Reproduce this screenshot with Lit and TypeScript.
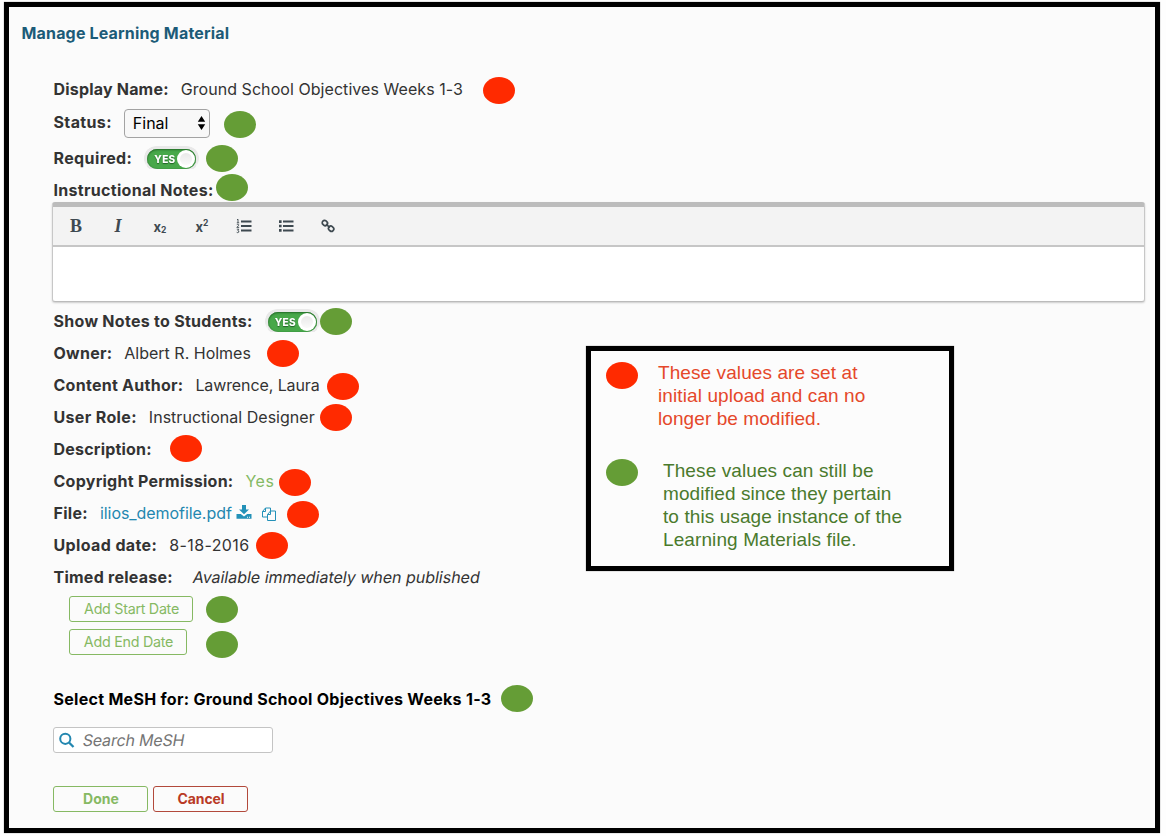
import { LitElement, html, css, svg, nothing } from "lit";
import { customElement, property } from "lit/decorators.js";
import { styleMap } from "lit/directives/style-map.js";

/** A run of text tracked so that it fills a given advance width. */
@customElement("fit-text")
class FitText extends LitElement {
  @property() text = "";
  @property({ type: Number }) w = 0;

  static styles = css`
    :host { display: inline-block; white-space: pre; flex: none; }
    .run { display: inline-block; }
  `;

  updated() {
    const run = this.renderRoot.querySelector(".run") as HTMLElement;
    run.style.letterSpacing = "0px";
    const natural = run.offsetWidth;
    run.style.letterSpacing = (this.w - natural) / this.text.length + "px";
  }

  render() {
    return html`<span class="run">${this.text}</span>`;
  }
}

type Dot = [string, number, number];
const dots: Dot[] = [
  ["red", 483, 77], ["green", 224, 111], ["green", 206, 145], ["green", 216, 174],
  ["green", 320, 308], ["red", 267, 340], ["red", 327, 373], ["red", 320, 404],
  ["red", 170, 435], ["red", 279, 469], ["red", 287, 501], ["red", 256, 532],
  ["green", 206, 596], ["green", 206, 631], ["green", 501, 685],
  ["red", 606, 362], ["green", 606, 459],
];

const t = (text: string, w: number, cls = "") =>
  html`<fit-text class=${cls} .text=${text} .w=${w}></fit-text>`;

@customElement("app-root")
class AppRoot extends LitElement {
  static styles = css`
    :host {
      display: block; position: relative; width: 1166px; height: 836px;
      background: #fefefe; overflow: hidden; box-sizing: border-box;
      padding: 2px 6px 3px 4px;
      font: 16px/20px Inter, "Liberation Sans", sans-serif; color: #333;
    }
    * { box-sizing: border-box; }
    svg { display: block; flex: none; }
    .frame {
      height: 831px; border: 5px solid #000; background: #fbfbfb;
      box-shadow: 0 0 1px #777; padding: 16px 10px 0 12px;
    }
    .title { color: #1c5b78; font-weight: 700; height: 20px; display: flex; padding-left: 0.5px; }
    .form { padding: 30px 0 0 32px; display: flex; flex-direction: column; }
    .row { height: 32px; display: flex; align-items: center; }
    .row > fit-text.label { font-weight: 700; margin-right: 12px; padding-left: 0.5px; }
    .status { height: 36px; }
    .status .label { margin-bottom: 2px; }
    .required { height: 34px; }
    .notes { height: 27px; padding-top: 3px; }
    .select {
      width: 86px; height: 29px; border: 1px solid #a3a3a3; border-radius: 4px;
      background: #f8f8f8; color: #000; display: flex; align-items: center;
      justify-content: space-between; padding: 0 3px 0 8px;
    }
    .toggle {
      width: 55px; height: 25px; border-radius: 12px; background: #e9e9e9;
      padding: 3px 3px 2px; margin-top: 1px;
      -webkit-mask: linear-gradient(#000 0 60%, transparent 85%), linear-gradient(#000, #000) 3px 3px / 49px 20px no-repeat;
    }
    .track {
      height: 20px; border-radius: 10px; background: #48a84a;
      box-shadow: inset 0 1px 2px #246d28, inset 0 0 1px #246d28;
      display: flex; align-items: center; justify-content: space-between; padding: 0 1px 0 7px;
      color: #fff; font-weight: 800; font-size: 10px; line-height: 20px;
      text-shadow: 0 1px 1px #226326;
    }
    .knob {
      width: 18px; height: 18px; border-radius: 50%; background: #fff;
      display: flex; align-items: center; justify-content: center;
    }
    .knob::after {
      content: ""; width: 12px; height: 12px; border-radius: 50%;
      background: linear-gradient(#e9e9e9, #fafafa);
    }
    .editor {
      width: 1093px; height: 100px; margin-left: -1px; border: 1px solid #c7c7c7; border-top: 5px solid #bcbcbc;
      border-bottom-color: #bbb; border-radius: 3px; background: #fff; box-shadow: 0 1px 2px #ccc;
      margin-bottom: 3px; flex: none;
    }
    .tools {
      height: 40px; background: #f3f3f3; border-bottom: 2px solid #c6c6c6;
      display: flex; align-items: center; color: #3e4950; padding-left: 2px;
    }
    .tool { width: 42px; height: 38px; display: flex; align-items: center; justify-content: center; }
    .serif { font: 700 18px/20px "Liberation Serif", serif; }
    .italic { font-style: italic; }
    .script { font-weight: 700; font-size: 13px; padding-top: 1px; }
    .script span { font-size: 8.5px; position: relative; top: 3px; }
    .script .up { top: -4px; }
    .oblique { transform: skewX(-10deg); }
    .yes { color: #84b963; }
    .link { color: #2387b0; }
    .icon-dl { margin-left: 4px; margin-top: -2px; }
    .icon-copy { margin-left: 10px; margin-top: 2px; }
    .row.timed > .label { margin-right: 20px; }
    .date {
      height: 26px; border: 1px solid #86b963; border-radius: 3px; color: #86b963;
      margin: 3px 0 0 16px; display: flex; align-items: center; justify-content: center; font-size: 14.3px;
    }
    .date fit-text, .action fit-text { padding-left: 1px; }
    .start { width: 124px; }
    .end { width: 118px; margin-top: 7px; }
    .mesh { margin-top: 28px; color: #000; }
    .search {
      width: 220px; height: 26px; margin-top: 12px; border: 1px solid #c4c4c4; border-radius: 3px; background: #fff;
      display: flex; align-items: center; padding-left: 5px; color: #757575; gap: 8px;
    }
    .actions { display: flex; gap: 5px; margin-top: 33px; }
    .action {
      width: 95px; height: 26px; border: 1px solid #86b963; border-radius: 3px; color: #86b963;
      font-weight: 700; font-size: 14px; display: flex; align-items: center; justify-content: center;
    }
    .cancel { color: #b93a26; border-color: #b2493b; }
    .dot { position: absolute; width: 32px; height: 27px; border-radius: 50%; }
    .dot.red { background: #ff2a00; }
    .dot.green { background: #659d36; }
    .legend {
      position: absolute; left: 586px; top: 346px; width: 368px; height: 225px;
      border: 5px solid #000; background: #fcfcfc; padding: 10px 0 0 67px; box-shadow: 0 0 1px #777;
      font: 19px/23px "Liberation Sans", sans-serif; display: flex; flex-direction: column; color: #e5482a;
    }
    .legend .g { color: #4a7a2c; margin-left: 5px; }
    .legend .g1 { margin-top: 29px; }
  `;

  toggle() {
    return html`<div class="toggle"><div class="track">${t("YES", 21)}<div class="knob"></div></div></div>`;
  }

  field(label: string, lw: number, value = "", vw = 0, cls = "", rowCls = "") {
    return html`<div class="row ${rowCls}">
      ${t(label, lw, "label")}${value ? t(value, vw, cls) : nothing}
    </div>`;
  }

  list(numbered: boolean) {
    return html`<svg width="16" height="16" viewBox="0 0 16 16" fill="#3e4950">
      <path d="M5 2.6h10.5v2H5zM5 7h10.5v2H5zM5 11.4h10.5v2H5z" />
      ${numbered
        ? svg`<g fill="none" stroke="#3e4950" stroke-width=".9"><path d="M1 1.8l1-.6v3.6M.8 4.8h2.4M.8 6.7q1-.8 1.9 0q.4.7-1.9 2.7h2.4M.8 11.2h2l-1 1.3q1.6.1.9 1.7-.9.9-2 .1"/></g>`
        : svg`<path d="M1 2.3h2.6v2.6H1zM1 6.7h2.6v2.6H1zM1 11.1h2.6v2.6H1z"/>`}
    </svg>`;
  }

  render() {
    return html`
      <div class="frame">
        <div class="title">${t("Manage Learning Material", 208)}</div>
        <div class="form">
          ${this.field("Display Name:", 115.5, "Ground School Objectives Weeks 1-3", 282)}
          <div class="row status">
            ${t("Status:", 58.5, "label")}
            <div class="select">${t("Final", 36)}
              <svg width="9" height="16" viewBox="0 0 9 16"><path d="M4.5 1L8.2 6.8H.8zM4.5 15L8.2 9.2H.8z" fill="#000" /></svg>
            </div>
          </div>
          <div class="row required">${t("Required:", 78.5, "label")}${this.toggle()}</div>
          <div class="row notes">${t("Instructional Notes:", 160, "label")}</div>
          <div class="editor">
            <div class="tools">
              <div class="tool serif">B</div>
              <div class="tool serif italic">I</div>
              <div class="tool script">x<span>2</span></div>
              <div class="tool script">x<span class="up">2</span></div>
              <div class="tool">${this.list(true)}</div>
              <div class="tool">${this.list(false)}</div>
              <div class="tool">
                <svg width="14" height="14" viewBox="0 0 14 14" fill="none" stroke="#3e4950" stroke-width="1.7">
                  <rect x="1.2" y="1.8" width="5.4" height="4.6" rx="2.2" transform="rotate(42 4 4)" />
                  <rect x="7.2" y="7.4" width="5.4" height="4.6" rx="2.2" transform="rotate(42 10 10)" />
                  <path d="M5.2 5.1l3.6 3.6" />
                </svg>
              </div>
            </div>
          </div>
          <div class="row">${t("Show Notes to Students:", 199.5, "label")}${this.toggle()}</div>
          ${this.field("Owner:", 58.5, "Albert R. Holmes", 127)}
          ${this.field("Content Author:", 130, "Lawrence, Laura", 124.5)}
          ${this.field("User Role:", 83.5, "Instructional Designer", 165.5)}
          ${this.field("Description:", 98.5)}
          ${this.field("Copyright Permission:", 179.5, "Yes", 28.5, "yes")}
          <div class="row">
            ${t("File:", 34.5, "label")}${t("ilios_demofile.pdf", 132, "link")}
            <svg class="icon-dl" width="16" height="14" viewBox="0 0 16 14" fill="#2391b8">
              <path d="M6 0h4v4.5h3L8 9.3 3 4.5h3zM.5 9h4.3L8 11.5 11.2 9h4.3v4.7H.5z" />
              <path d="M11 11.7h1v1h-1zM13 11.7h1v1h-1z" fill="#fff" />
            </svg>
            <svg class="icon-copy" width="14" height="14" viewBox="0 0 14 14" fill="none" stroke="#2391b8" stroke-width="1">
              <path d="M5.5 10H.5V4.5l3-3.5h5v3M.5 4.5h3V1M8.5 4h5v9.5h-8V7.5zM5.5 7.5h3V4" />
            </svg>
          </div>
          ${this.field("Upload date:", 103.5, "8-18-2016", 80.5)}
          ${this.field("Timed release:", 119.5, "Available immediately when published", 287.5, "oblique", "timed")}
          <div class="date start">${t("Add Start Date", 95)}</div>
          <div class="date end">${t("Add End Date", 89)}</div>
          <div class="row mesh">${t("Select MeSH for: Ground School Objectives Weeks 1-3", 437.5, "label")}</div>
          <div class="search">
            <svg width="16" height="16" viewBox="0 0 16 16" fill="none" stroke="#2387b0" stroke-width="2">
              <circle cx="6.3" cy="6.8" r="5.1" /><path d="M10 10.5l4.5 4.5" stroke-width="2.3" />
            </svg>
            ${t("Search MeSH", 102, "oblique")}
          </div>
          <div class="actions">
            <div class="action">${t("Done", 36)}</div>
            <div class="action cancel">${t("Cancel", 47.5)}</div>
          </div>
        </div>
      </div>
      <div class="legend">
        ${t("These values are set at", 200)}
        ${t("initial upload and can no", 207.5)}
        ${t("longer be modified.", 163.5)}
        ${t("These values can still be", 210.5, "g g1")}
        ${t("modified since they pertain", 228.5, "g")}
        ${t("to this usage instance of the", 239.5, "g")}
        ${t("Learning Materials file.", 193.5, "g")}
      </div>
      ${dots.map(([c, x, y]) => html`<div class="dot ${c}" style=${styleMap({ left: x + "px", top: y + "px" })}></div>`)}
    `;
  }
}
